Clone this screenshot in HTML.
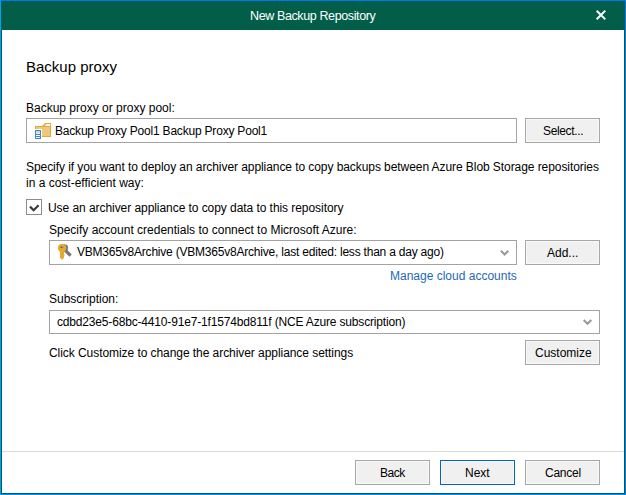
<!DOCTYPE html>
<html><head><meta charset="utf-8">
<style>
*{margin:0;padding:0;box-sizing:border-box}
html,body{width:626px;height:495px;overflow:hidden;background:#fff}
body{font-family:"Liberation Sans",sans-serif;font-size:12px;color:#000;position:relative}
.a{position:absolute;white-space:nowrap;line-height:1}
#win{position:absolute;left:0;top:0;width:626px;height:495px;border-style:solid;border-width:1px;border-color:#0079f0 #0078ff #0092ff #00a0ff;background:#035e49}
#title{position:absolute;left:1px;top:1px;width:624px;height:29px;background:#025e49}
#content{position:absolute;left:2px;top:30px;width:622px;height:463px;background:#fff}
.box{position:absolute;border:1px solid #a3a3a3;background:#fff}
.btn{position:absolute;border:1px solid #a6a6a6;background:#f0f0f0;box-shadow:inset 0 0 0 1px #f9f9f9}
.sep{position:absolute;left:2px;width:622px;height:1px;background:#d9d9d9}
svg{position:absolute;left:0;top:0}
</style></head><body>
<div id="win"></div>
<div id="title"></div>
<div id="content"></div>
<div class="a" style="left:250px;top:9.5px;color:#fff;font-size:12.5px;letter-spacing:-0.38px">New Backup Repository</div>

<div class="a" style="left:26px;top:59px;font-size:15px;color:#000">Backup proxy</div>
<div class="a" style="left:26px;top:102px">Backup proxy or proxy pool:</div>
<div class="box" style="left:26px;top:118px;width:491px;height:25px"></div>
<div class="a" style="left:55px;top:125px;letter-spacing:-0.2px">Backup Proxy Pool1 Backup Proxy Pool1</div>
<div class="btn" style="left:525px;top:118px;width:75px;height:25px"></div>
<div class="a" style="left:543px;top:125px;letter-spacing:-0.36px">Select...</div>

<div class="a" style="left:26px;top:161px;letter-spacing:-0.07px">Specify if you want to deploy an archiver appliance to copy backups between Azure Blob Storage repositories</div>
<div class="a" style="left:26px;top:177px">in a cost-efficient way:</div>

<div class="box" style="left:26px;top:199px;width:16px;height:16px;border-color:#8c8c8c"></div>
<div class="a" style="left:48px;top:202px;letter-spacing:-0.06px">Use an archiver appliance to copy data to this repository</div>
<div class="a" style="left:49px;top:224px">Specify account credentials to connect to Microsoft Azure:</div>
<div class="box" style="left:49px;top:240px;width:468px;height:25px"></div>
<div class="a" style="left:77px;top:246px;letter-spacing:-0.21px">VBM365v8Archive (VBM365v8Archive, last edited: less than a day ago)</div>
<div class="btn" style="left:525px;top:240px;width:75px;height:25px"></div>
<div class="a" style="left:547px;top:247px">Add...</div>
<div class="a" style="left:390px;top:270px;color:#2368b8">Manage cloud accounts</div>

<div class="a" style="left:49px;top:293px">Subscription:</div>
<div class="box" style="left:49px;top:310px;width:551px;height:24px"></div>
<div class="a" style="left:57px;top:316px;letter-spacing:-0.17px">cdbd23e5-68bc-4410-91e7-1f1574bd811f (NCE Azure subscription)</div>
<div class="a" style="left:49px;top:347px;letter-spacing:-0.06px">Click Customize to change the archiver appliance settings</div>
<div class="btn" style="left:525px;top:340px;width:75px;height:25px"></div>
<div class="a" style="left:535px;top:347px">Customize</div>

<div class="sep" style="top:451px"></div>
<div class="btn" style="left:355px;top:460px;width:75px;height:25px"></div>
<div class="a" style="left:380px;top:467px;letter-spacing:-0.5px">Back</div>
<div class="btn" style="left:440px;top:460px;width:75px;height:25px;border-color:#0067c0"></div>
<div class="a" style="left:465px;top:467px">Next</div>
<div class="btn" style="left:525px;top:460px;width:75px;height:25px"></div>
<div class="a" style="left:545px;top:467px;letter-spacing:-0.25px">Cancel</div>

<svg width="626" height="495" viewBox="0 0 626 495">
 <!-- close X -->
 <path d="M597.4 11.4L604.6 18.6M604.6 11.4L597.4 18.6" stroke="#fff" stroke-width="2" stroke-linecap="square" fill="none"/>
 <!-- checkbox check -->
 <path d="M30 206.6L33.6 210.2L38.6 205.2" stroke="#3c3c3c" stroke-width="2.3" fill="none"/>
 <!-- combo arrows -->
 <path d="M500.9 250.7L504.6 254.4L508.3 250.7" stroke="#9a9a9a" stroke-width="2.1" fill="none"/>
 <path d="M583.7 320.0L587.5 323.8L591.3 320.0" stroke="#9a9a9a" stroke-width="2.1" fill="none"/>
 <!-- folder icon -->
 <path d="M41.6 126.5L45.1 123H51V126.5Z" fill="#e3a936"/>
 <path d="M44.6 126L46.4 124H50V126Z" fill="#fff"/>
 <rect x="35" y="126" width="16" height="11" fill="#e3a936"/>
 <rect x="36" y="127" width="14" height="9" fill="#f1c879"/>
 <rect x="34" y="129" width="8" height="11" fill="#fff"/>
 <rect x="35" y="130" width="6" height="9" fill="#3a8bc8"/>
 <defs><linearGradient id="sg" x1="0" y1="0" x2="0" y2="1"><stop offset="0" stop-color="#b9cfea"/><stop offset="1" stop-color="#e4edf8"/></linearGradient></defs><rect x="36" y="131" width="4" height="3" fill="url(#sg)"/>
 <rect x="36" y="135" width="4" height="1" fill="#fff"/>
 <rect x="36" y="137" width="4" height="1" fill="#fff"/>
  <!-- key icon -->
 <circle cx="64.6" cy="247.8" r="3.5" fill="#7d7d7d"/>
 <path d="M65.2 250.2L70.6 255.6" stroke="#787878" stroke-width="3.4" fill="none"/>
 <ellipse cx="62" cy="248" rx="4.1" ry="3.9" fill="#e6a92f"/>
 <rect x="60" y="250" width="4" height="8" fill="#e6a92f"/>
 <path d="M60 257.5L62 260L64 257.5Z" fill="#e6a92f"/>
 <rect x="63" y="254.5" width="1.5" height="1.5" fill="#e6a92f"/>
 <ellipse cx="62.3" cy="247.3" rx="1.8" ry="0.85" fill="#9a9a9a"/>
 <ellipse cx="61.4" cy="247.3" rx="0.9" ry="0.8" fill="#505050"/>
</svg>
</body></html>
